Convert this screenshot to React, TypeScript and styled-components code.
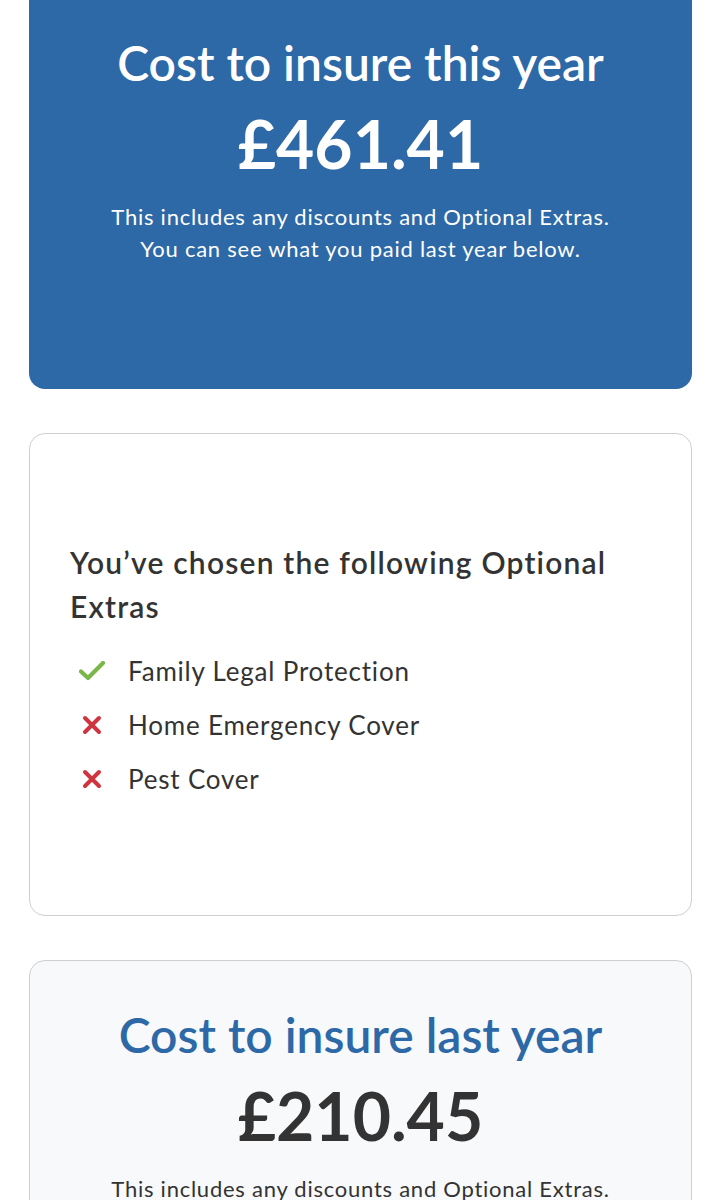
import React from "react";
import styled, { createGlobalStyle } from "styled-components";

const GlobalStyle = createGlobalStyle`
  html, body {
    margin: 0;
    padding: 0;
    background: #ffffff;
  }
  body {
    font-family: Lato, "Open Sans", Arial, sans-serif;
    color: #333333;
  }
`;

const Page = styled.main`
  display: flex;
  flex-direction: column;
  gap: 44px;
  padding: 0 29px 40px;
`;

const PriceCard = styled.section<{ $variant: "current" | "previous" }>`
  box-sizing: border-box;
  text-align: center;
  border-radius: ${(p) => (p.$variant === "current" ? "0 0 16px 16px" : "16px")};
  background: ${(p) => (p.$variant === "current" ? "#2d68a7" : "#f8f9fb")};
  border: ${(p) => (p.$variant === "current" ? "none" : "1px solid #cfcfcf")};
  color: ${(p) => (p.$variant === "current" ? "#ffffff" : "#333333")};
  padding: ${(p) => (p.$variant === "current" ? "35px 20px 124px" : "46px 20px 40px")};
`;

const CardTitle = styled.h2<{ $blue?: boolean }>`
  margin: 0;
  font-size: 48px;
  line-height: 56px;
  font-weight: 600;
  color: ${(p) => (p.$blue ? "#2d68a7" : "inherit")};
`;

const Price = styled.div`
  margin-top: 13px;
  font-size: 66px;
  line-height: 80px;
  font-weight: 700;
`;

const Note = styled.p`
  margin: 17px 0 0;
  font-size: 22px;
  line-height: 32px;
  letter-spacing: 0.75px;
`;

const ExtrasCard = styled.section`
  border: 1px solid #cfcfcf;
  border-radius: 16px;
  padding: 106px 40px 109px;
`;

const ExtrasHeading = styled.h3`
  margin: 0 0 16px;
  font-size: 30px;
  line-height: 44px;
  font-weight: 600;
  letter-spacing: 1.2px;
  color: #333333;
`;

const ExtrasList = styled.ul`
  list-style: none;
  margin: 0;
  padding: 0;
`;

const ExtraRow = styled.li`
  display: flex;
  align-items: center;
  height: 54px;
  font-size: 26px;
  letter-spacing: 0.8px;
  color: #333333;
`;

const IconSlot = styled.span`
  display: flex;
  align-items: center;
  justify-content: center;
  width: 44px;
  margin: 0 14px 0 0;
`;

const Check = () => (
  <svg width="26" height="20" viewBox="0 0 26 20">
    <path d="M2 10.5 L9 17 L24 2" fill="none" stroke="#7ab648" strokeWidth="4.2" strokeLinecap="round" strokeLinejoin="round" />
  </svg>
);

const Cross = () => (
  <svg width="20" height="20" viewBox="0 0 20 20">
    <path d="M3 3 L17 17 M17 3 L3 17" fill="none" stroke="#d0343f" strokeWidth="4" strokeLinecap="round" />
  </svg>
);

const extras = [
  { name: "Family Legal Protection", chosen: true },
  { name: "Home Emergency Cover", chosen: false },
  { name: "Pest Cover", chosen: false },
];

const App: React.FC = () => {
  return (
    <>
      <GlobalStyle />
      <Page>
        <PriceCard $variant="current">
          <CardTitle>Cost to insure this year</CardTitle>
          <Price>£461.41</Price>
          <Note>
            This includes any discounts and Optional Extras.
            <br />
            You can see what you paid last year below.
          </Note>
        </PriceCard>

        <ExtrasCard>
          <ExtrasHeading>You’ve chosen the following Optional Extras</ExtrasHeading>
          <ExtrasList>
            {extras.map((extra) => (
              <ExtraRow key={extra.name}>
                <IconSlot>{extra.chosen ? <Check /> : <Cross />}</IconSlot>
                {extra.name}
              </ExtraRow>
            ))}
          </ExtrasList>
        </ExtrasCard>

        <PriceCard $variant="previous">
          <CardTitle $blue>Cost to insure last year</CardTitle>
          <Price>£210.45</Price>
          <Note>
            This includes any discounts and Optional Extras.
            <br />
            You can see what you paid last year below.
          </Note>
        </PriceCard>
      </Page>
    </>
  );
};

export default App;
